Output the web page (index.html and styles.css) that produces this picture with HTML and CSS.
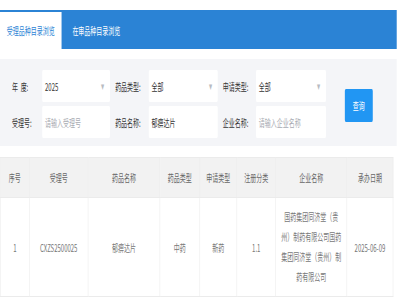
FILE: index.html
```html
<!DOCTYPE html>
<html lang="zh-CN">
<head>
    <meta charset="UTF-8">
    <meta name="viewport" content="width=device-width, initial-scale=1.0">
    <title>品种目录浏览</title>
    <link rel="stylesheet" href="styles.css">
</head>
<body>
    <div class="frame">
        <div class="page">
            <div class="tabs">
                <div class="tab active">受理品种目录浏览</div>
                <div class="tab">在审品种目录浏览</div>
            </div>

            <div class="filter">
                <div class="fields">
                    <label class="lbl first">年&nbsp;&nbsp;度:</label>
                    <div class="input select">2025<span class="arrow">▾</span></div>
                    <label class="lbl">药品类型:</label>
                    <div class="input select">全部<span class="arrow">▾</span></div>
                    <label class="lbl">申请类型:</label>
                    <div class="input select">全部<span class="arrow">▾</span></div>

                    <label class="lbl first">受理号:</label>
                    <div class="input placeholder">请输入受理号</div>
                    <label class="lbl">药品名称:</label>
                    <div class="input">郁痹达片</div>
                    <label class="lbl">企业名称:</label>
                    <div class="input placeholder">请输入企业名称</div>
                </div>
                <button class="btn">查询</button>
            </div>

            <table class="list">
                <colgroup>
                    <col style="width:51px">
                    <col style="width:103px">
                    <col style="width:126px">
                    <col style="width:70px">
                    <col style="width:65px">
                    <col style="width:68px">
                    <col style="width:125px">
                    <col style="width:81px">
                </colgroup>
                <thead>
                    <tr>
                        <th>序号</th>
                        <th>受理号</th>
                        <th>药品名称</th>
                        <th>药品类型</th>
                        <th>申请类型</th>
                        <th>注册分类</th>
                        <th>企业名称</th>
                        <th>承办日期</th>
                    </tr>
                </thead>
                <tbody>
                    <tr>
                        <td>1</td>
                        <td>CXZS2500025</td>
                        <td>郁痹达片</td>
                        <td>中药</td>
                        <td>新药</td>
                        <td>1.1</td>
                        <td class="company">国药集团同济堂（贵州）制药有限公司国药集团同济堂（贵州）制药有限公司</td>
                        <td>2025-06-09</td>
                    </tr>
                </tbody>
            </table>
        </div>
    </div>
</body>
</html>
```

FILE: styles.css
```css
body {
    margin: 0;
    overflow: hidden;
    background: #fff;
    font-family: "Noto Sans CJK SC", "Noto Sans", sans-serif;
    font-size: 10.5px;
    color: #333;
}
.frame {
    width: 400px;
    height: 300px;
    overflow: hidden;
}
/* the page is drawn narrow: wide layout squeezed into the window */
.page {
    width: 702px;
    transform: scaleX(0.57);
    transform-origin: 0 0;
}
.tabs {
    margin-top: 10px;
    width: 696px;
    height: 39px;
    display: flex;
    align-items: flex-end;
    background: #2b83d5;
}
.tab {
    height: 37px;
    line-height: 37px;
    padding: 0 12px;
    margin-right: 7px;
    color: #fff;
}
.tab.active {
    background: #fff;
    color: #2b83d5;
}
.filter {
    margin-top: 10px;
    width: 696px;
    height: 87px;
    box-sizing: border-box;
    padding: 11px 0 8px 21px;
    background: #f4f5f8;
    display: flex;
    align-items: center;
}
.fields {
    display: grid;
    grid-template-columns: 53px 119px 68px 121px 67px 123px;
    grid-template-rows: 32px 32px;
    row-gap: 4px;
    align-self: flex-start;
}
.lbl {
    display: flex;
    align-items: center;
    padding-left: 9px;
    color: #333;
}
.lbl.first {
    padding-left: 0;
}
.input {
    position: relative;
    display: flex;
    align-items: center;
    padding-left: 5px;
    background: #fff;
    border-radius: 2px;
    color: #333;
}
.input.placeholder {
    color: #a8abb2;
}
.select .arrow {
    position: absolute;
    right: 9px;
    top: 8px;
    color: #b8bbc2;
}
.btn {
    margin-left: 33px;
    margin-top: 2px;
    width: 49px;
    height: 33px;
    border: none;
    border-radius: 2px;
    background: #2196f3;
    color: #fff;
    font-family: inherit;
    font-size: 10.5px;
    padding: 0;
}
.list {
    margin-top: 11px;
    width: 689px;
    border-collapse: collapse;
    table-layout: fixed;
}
.list th, .list td {
    border: 1px solid #ebebeb;
    text-align: center;
    font-weight: normal;
    color: #666;
}
.list th {
    height: 37px;
    background: #f2f2f2;
}
.list td {
    height: 96px;
    color: #777;
}
.list td.company {
    padding: 0 9px;
    line-height: 20px;
}
```
